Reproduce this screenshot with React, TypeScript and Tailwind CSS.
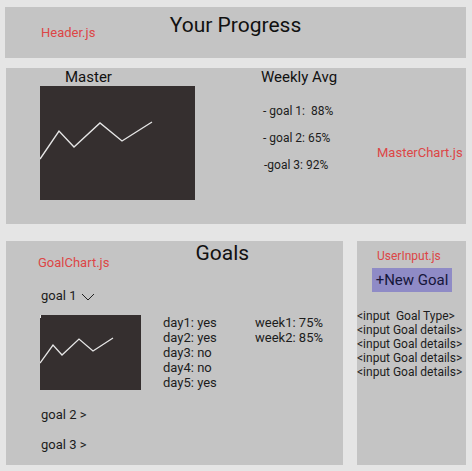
import React from "react";

// Wireframe of the progress page: header, master chart, goals and user input panels

const red = "text-[#dd4646]";

const MasterLine = () => (
  <svg width="155" height="114" viewBox="0 0 155 114" className="block">
    <rect width="155" height="114" fill="#352f2f" />
    <polyline
      points="0,73 19,45 34,61 60,37 82,55 112,36"
      fill="none"
      stroke="#e6e6e6"
      strokeWidth="1.4"
    />
  </svg>
);

const GoalLine = () => (
  <svg width="101" height="75" viewBox="0 0 101 75" className="block">
    <rect width="101" height="75" fill="#352f2f" />
    <line x1="0.5" y1="0" x2="0.5" y2="3" stroke="#e6e6e6" strokeWidth="1" />
    <polyline
      points="0,48 13,30 22,40 39,24 53,36 73,23"
      fill="none"
      stroke="#e6e6e6"
      strokeWidth="1.3"
    />
  </svg>
);

const Chevron = () => (
  <svg width="14" height="8" viewBox="0 0 14 8" className="ml-[5px] mt-[5px]">
    <polyline points="1,1 7,7 13,1" fill="none" stroke="#222" strokeWidth="1" />
  </svg>
);

export default function App() {
  const days = ["day1: yes", "day2: yes", "day3: no", "day4: no", "day5: yes"];
  const inputs = [
    "<input  Goal Type>",
    "<input Goal details>",
    "<input Goal details>",
    "<input Goal details>",
    "<input Goal details>",
  ];

  return (
    <div
      className="w-[472px] h-[471px] bg-[#e5e5e5] pt-[7px] overflow-hidden text-[#1c1c1c]"
      style={{ fontFamily: "Roboto, 'Liberation Sans', sans-serif" }}
    >
      {/* Header */}
      <div className="ml-[5px] w-[461px] h-[51px] bg-[#c4c4c4] grid grid-cols-[1fr_auto_1fr]">
        <div className={`pl-[36px] pt-[18px] text-[13px] leading-[16px] ${red}`}>Header.js</div>
        <div className="pt-[6px] text-[21px] leading-[24px] text-[#111]">Your Progress</div>
        <div />
      </div>

      {/* Master chart */}
      <div className="ml-[6px] mt-[10px] w-[460px] h-[156px] bg-[#c4c4c4] flex items-start">
        <div className="ml-[34px] w-[155px] flex flex-col">
          <div className="ml-[25px] text-[15px] leading-[18px] text-[#111]">Master</div>
          <MasterLine />
        </div>
        <div className="ml-[66px] w-[116px] flex flex-col">
          <div className="text-[15px] leading-[18px] text-[#111]">Weekly Avg</div>
          <div className="ml-[2px] mt-[18px] flex flex-col gap-[13px] text-[12px] leading-[14px] whitespace-pre">
            <div>- goal 1:  88%</div>
            <div>- goal 2: 65%</div>
            <div className="ml-[1px]">-goal 3: 92%</div>
          </div>
        </div>
        <div className={`pt-[77px] text-[13px] leading-[16px] ${red}`}>MasterChart.js</div>
      </div>

      <div className="ml-[6px] mt-[17px] flex gap-[14px]">
        {/* Goals */}
        <div className="w-[337px] h-[224px] bg-[#c4c4c4] flex flex-col">
          <div className="flex items-start">
            <div className={`ml-[32px] pt-[14px] text-[13px] leading-[16px] ${red}`}>GoalChart.js</div>
            <div className="ml-[86px] text-[21px] leading-[24px] text-[#111]">Goals</div>
          </div>
          <div className="ml-[35px] mt-[17px] flex items-start text-[13px] leading-[16px]">
            <span>goal 1</span>
            <Chevron />
          </div>
          <div className="ml-[34px] mt-[11px] flex items-start">
            <GoalLine />
            <div className="ml-[22px] w-[92px] flex flex-col text-[13px] leading-[15px]">
              {days.map((d) => (
                <div key={d}>{d}</div>
              ))}
            </div>
            <div className="flex flex-col text-[13px] leading-[15px]">
              <div>week1: 75%</div>
              <div>week2: 85%</div>
            </div>
          </div>
          <div className="ml-[35px] mt-[17px] text-[13px] leading-[16px]">goal 2 &gt;</div>
          <div className="ml-[35px] mt-[14px] text-[13px] leading-[16px]">goal 3 &gt;</div>
        </div>

        {/* User input */}
        <div className="w-[109px] h-[224px] bg-[#c4c4c4] flex flex-col">
          <div className={`ml-[20px] mt-[8px] text-[12px] leading-[14px] ${red}`}>UserInput.js</div>
          <div className="ml-[15px] mt-[5px] w-[80px] h-[24px] bg-[#8f8bc6] flex items-center justify-center text-[15px] text-[#16163a]">
            +New Goal
          </div>
          <div className="mt-[17px] flex flex-col text-[12px] leading-[14px] whitespace-pre">
            {inputs.map((t, i) => (
              <div key={i}>{t}</div>
            ))}
          </div>
        </div>
      </div>
    </div>
  );
}
